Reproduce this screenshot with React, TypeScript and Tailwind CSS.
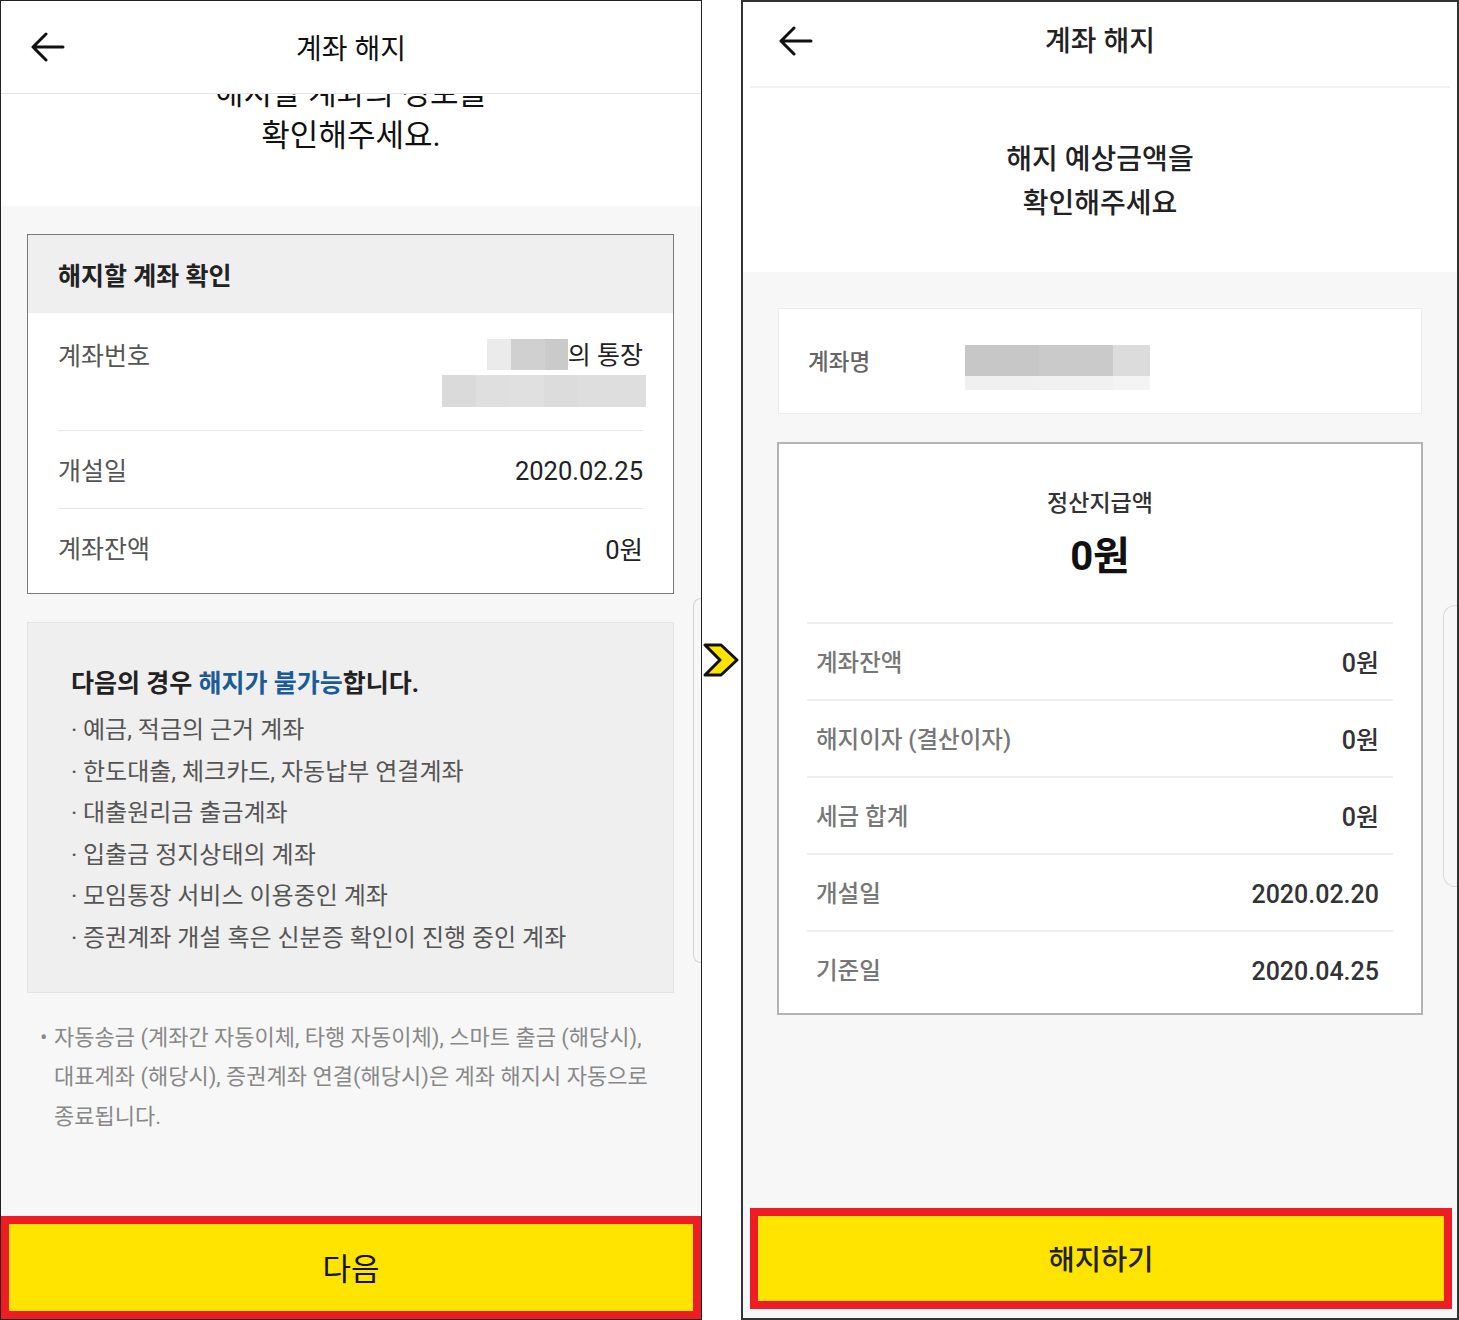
import type { ReactNode } from 'react'

function BackArrow() {
  return (
    <svg width="35" height="30" viewBox="0 0 35 30" fill="none" stroke="currentColor" strokeWidth="3" strokeLinecap="round" strokeLinejoin="round">
      <path d="M33 15H3M16 2L3 15l13 13" />
    </svg>
  )
}

function Chevron() {
  return (
    <svg width="37" height="37" viewBox="0 0 37 37" className="mt-[641px] ml-[1px]">
      <polygon points="2,4 18,4 34,19 18,34 2,34 17,19" fill="#ffe400" stroke="#111" strokeWidth="3" strokeLinejoin="round" />
    </svg>
  )
}

function Blocks({ items, h }: { items: [number, string][]; h: string }) {
  return (
    <div className={`flex ${h}`}>
      {items.map(([w, c], i) => (
        <div key={i} style={{ width: w, background: c }} />
      ))}
    </div>
  )
}

function LeftRow({ label, children, className }: { label: string; children: ReactNode; className: string }) {
  return (
    <div className={`flex items-center justify-between px-[30px] ${className}`}>
      <span className="text-[25px] text-[#555]">{label}</span>
      <span className="text-[25.5px] text-[#222]">{children}</span>
    </div>
  )
}

const rules = [
  '예금, 적금의 근거 계좌',
  '한도대출, 체크카드, 자동납부 연결계좌',
  '대출원리금 출금계좌',
  '입출금 정지상태의 계좌',
  '모임통장 서비스 이용중인 계좌',
  '증권계좌 개설 혹은 신분증 확인이 진행 중인 계좌',
]

const settle = [
  ['계좌잔액', '0원'],
  ['해지이자 (결산이자)', '0원'],
  ['세금 합계', '0원'],
  ['개설일', '2020.02.20'],
  ['기준일', '2020.04.25'],
]

export default function App() {
  return (
    <div className="flex h-[1320px] w-[1459px] overflow-hidden bg-white font-['Roboto','Noto_Sans_CJK_KR',sans-serif] text-[#111]">
      {/* 왼쪽 화면 */}
      <div className="relative flex w-[702px] shrink-0 flex-col border border-[#222]">
        <header className="grid h-[92px] grid-cols-[1fr_auto_1fr] items-center px-[29px]">
          <BackArrow />
          <h1 className="pt-[6px] text-[28px]">계좌 해지</h1>
          <span />
        </header>
        <div className="h-px bg-[#e6e6e6]" />
        <div className="h-[112px] overflow-hidden bg-white">
          <p className="-mt-[21px] text-center text-[31px] leading-[42px]">
            해지할 계좌의 정보를
            <br />
            확인해주세요.
          </p>
        </div>

        <div className="flex-1 bg-[#f7f7f7] pt-[28px] pr-[27px] pl-[26px]">
          <div className="border border-[#7a7a7a] bg-white">
            <div className="flex h-[78px] items-center bg-[#efefef] px-[30px] pt-[5px] text-[25px] font-bold text-[#222]">
              해지할 계좌 확인
            </div>
            <div className="flex h-[117px] items-start justify-between px-[30px] pt-[24px]">
              <span className="pt-[3px] text-[25px] leading-[34px] text-[#555]">계좌번호</span>
              <div className="flex flex-col items-end">
                <div className="flex h-[34px] items-center text-[25px] text-[#222]">
                  <Blocks h="h-[31px]" items={[[24, '#ebebeb'], [34, '#d0d0d0'], [23, '#cacaca']]} />
                  <span className="pt-[4px]">의 통장</span>
                </div>
                <div className="-mr-[3px] mt-[4px]">
                  <Blocks h="h-[32px]" items={[[34, '#dadada'], [34, '#dfdfdf'], [34, '#e0e0e0'], [34, '#dcdcdc'], [68, '#dedede']]} />
                </div>
              </div>
            </div>
            <div className="mx-[30px] h-px bg-[#e6e6e6]" />
            <LeftRow label="개설일" className="h-[77px] pt-[4px]">2020.02.25</LeftRow>
            <div className="mx-[30px] h-px bg-[#e6e6e6]" />
            <LeftRow label="계좌잔액" className="h-[84px] pb-[2px]">0원</LeftRow>
          </div>

          <div className="mt-[28px] border border-[#e3e3e3] bg-[#efefef] pt-[43px] pb-[32px] pl-[43px]">
            <p className="text-[25px] leading-[36px] font-bold text-[#222]">
              다음의 경우 <span className="text-[#1b5c98]">해지가 불가능</span>합니다.
            </p>
            <ul className="mt-[8px]">
              {rules.map((r) => (
                <li key={r} className="flex text-[24px] leading-[41.6px] text-[#555]">
                  <span className="w-[12px]">·</span>
                  {r}
                </li>
              ))}
            </ul>
          </div>

          <div className="mt-[25px] flex pl-[13px] text-[22px] leading-[39.5px] text-[#888]">
            <span className="w-[14px] shrink-0">•</span>
            <p className="whitespace-nowrap">
              자동송금 (계좌간 자동이체, 타행 자동이체), 스마트 출금 (해당시),
              <br />
              대표계좌 (해당시), 증권계좌 연결(해당시)은 계좌 해지시 자동으로
              <br />
              종료됩니다.
            </p>
          </div>
        </div>

        <button className="flex h-[103px] items-center justify-center border-[8px] border-[#ee1c24] bg-[#ffe400] pt-[5px] text-[31px] text-[#111]">
          다음
        </button>

        <div className="absolute top-[597px] right-0 h-[365px] w-[8px] rounded-l-[10px] border border-r-0 border-[#d4d4d4]" />
      </div>

      {/* 가운데 화살표 */}
      <div className="w-[39px] shrink-0">
        <Chevron />
      </div>

      {/* 오른쪽 화면 */}
      <div className="relative flex w-[718px] shrink-0 flex-col border-2 border-[#333]">
        <header className="grid h-[84px] grid-cols-[1fr_auto_1fr] items-center px-[35px] pb-[7px]">
          <BackArrow />
          <h1 className="pt-[3px] text-[28px] font-medium text-[#222]">계좌 해지</h1>
          <span />
        </header>
        <div className="mx-[7px] h-[2px] bg-[#f2f2f2]" />
        <div className="h-[184px] pt-[50px] text-center text-[28px] leading-[44px] font-medium text-[#222]">
          해지 예상금액을
          <br />
          확인해주세요
        </div>

        <div className="flex flex-1 flex-col bg-[#f7f7f7]">
          <div className="mx-[35px] mt-[36px] flex h-[106px] items-center border border-[#ececec] bg-white pl-[29px]">
            <span className="w-[157px] pt-[4px] text-[22.5px] font-medium text-[#666]">계좌명</span>
            <div className="mt-[12px] flex flex-col">
              <Blocks h="h-[31px]" items={[[74, '#c7c7c7'], [74, '#cacaca'], [37, '#dcdcdc']]} />
              <Blocks h="h-[14px]" items={[[74, '#f0f0f0'], [74, '#f1f1f1'], [37, '#f4f4f4']]} />
            </div>
          </div>

          <div className="mx-[34px] mt-[28px] border-2 border-[#b4b4b4] bg-white pt-[44px] pb-[6px]">
            <p className="text-center text-[23px] leading-[32px] font-medium text-[#333]">정산지급액</p>
            <p className="mt-[13px] text-center text-[40px] leading-[48px] font-bold text-[#111]">0원</p>
            <div className="mx-[28px] mt-[41px]">
              {settle.map(([k, v]) => (
                <div key={k}>
                  <div className="h-[2px] bg-[#f0f0f0]" />
                  <div className="flex h-[75px] items-center justify-between pt-[4px] pr-[14px] pl-[9px]">
                    <span className="text-[23.5px] font-medium text-[#777]">{k}</span>
                    <span className="text-[25px] font-medium text-[#333]">{v}</span>
                  </div>
                </div>
              ))}
            </div>
          </div>

          <button className="mt-auto mr-[5px] mb-[9px] ml-[7px] flex h-[101px] items-center justify-center border-[8px] border-[#ee1c24] bg-[#ffe400] pt-[5px] text-[28.5px] font-medium text-[#222]">
            해지하기
          </button>
        </div>

        <div className="absolute top-[603px] right-0 h-[282px] w-[14px] rounded-l-[12px] border border-r-0 border-[#dadada]" />
      </div>
    </div>
  )
}
